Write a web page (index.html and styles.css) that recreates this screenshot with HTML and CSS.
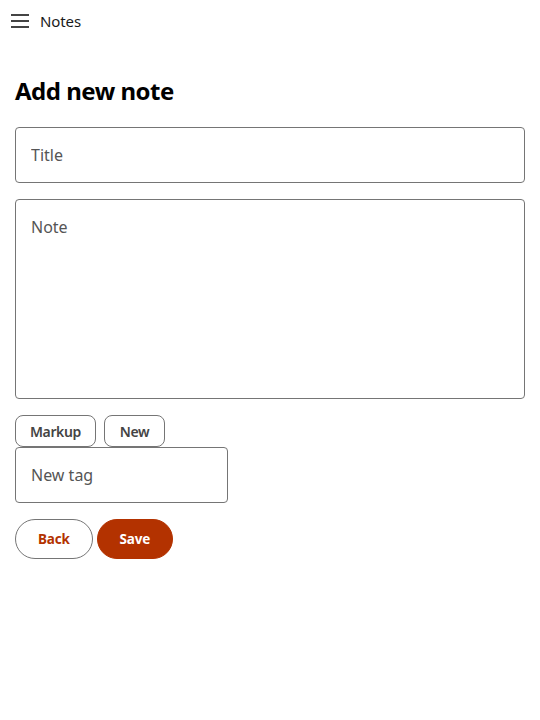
FILE: index.html
```html
<!DOCTYPE html>
<html lang="en">
<head>
<meta charset="utf-8">
<title>Notes</title>
<link rel="stylesheet" href="styles.css">
</head>
<body>
<header class="topbar">
  <button class="menu" aria-label="Menu">
    <svg width="18" height="14" viewBox="0 0 18 14"><rect x="0" y="0" width="18" height="2" fill="#444"/><rect x="0" y="6" width="18" height="2" fill="#444"/><rect x="0" y="12" width="18" height="2" fill="#444"/></svg>
  </button>
  <span class="app-title">Notes</span>
</header>
<main class="content">
  <h1 class="heading">Add new note</h1>
  <form class="form">
    <input class="field" type="text" placeholder="Title">
    <textarea class="field area" placeholder="Note"></textarea>
    <div class="tags">
      <div class="chips">
        <button type="button" class="chip">Markup</button>
        <button type="button" class="chip chip-wide">New</button>
      </div>
      <input class="field tag-field" type="text" placeholder="New tag">
    </div>
    <div class="actions">
      <button type="button" class="btn btn-outline">Back</button>
      <button type="button" class="btn btn-primary">Save</button>
    </div>
  </form>
</main>
</body>
</html>
```
FILE: styles.css
```css
* { box-sizing: border-box; }
body {
  margin: 0;
  font-family: "Noto Sans", "Open Sans", sans-serif;
  color: #000;
  background: #fff;
}
.topbar {
  display: flex;
  align-items: center;
  height: 42px;
  padding: 0 11px;
  gap: 11px;
}
.menu {
  border: 0;
  background: none;
  padding: 0;
  width: 18px;
  height: 14px;
  display: flex;
}
.app-title {
  font-size: 15px;
  color: #1a1a1a;
  letter-spacing: -0.1px;
}
.content {
  padding: 0 15px;
}
.heading {
  margin: 33px 0 20px;
  font-size: 24px;
  font-weight: 700;
  line-height: 32px;
  letter-spacing: -0.5px;
}
.form {
  display: flex;
  flex-direction: column;
  gap: 16px;
}
.field {
  display: block;
  width: 100%;
  height: 56px;
  border: 1px solid #757575;
  border-radius: 4px;
  padding: 0 15px;
  font-family: inherit;
  font-size: 16px;
  color: #222;
  background: #fff;
  outline: none;
}
.field::placeholder { color: #555; }
.area {
  height: 200px;
  padding: 16px 15px;
  resize: none;
}
.tags {
  display: flex;
  flex-direction: column;
}
.chips {
  display: flex;
  gap: 8px;
}
.chip {
  height: 32px;
  padding: 0 14px;
  border: 1px solid #757575;
  border-radius: 8px;
  background: #fff;
  font-family: inherit;
  font-size: 14px;
  font-weight: 600;
  letter-spacing: -0.4px;
  color: #444;
}
.chip-wide {
  padding: 0 15px;
}
.tag-field {
  width: 213px;
}
.actions {
  display: flex;
  gap: 4px;
}
.btn {
  height: 40px;
  border-radius: 20px;
  font-family: inherit;
  font-size: 13.5px;
  font-weight: 700;
  letter-spacing: -0.2px;
  padding: 0 22px;
}
.btn-outline {
  background: #fff;
  border: 1px solid #757575;
  color: #b33200;
}
.btn-primary {
  background: #b33200;
  border: 1px solid #b33200;
  color: #fff;
}
```
